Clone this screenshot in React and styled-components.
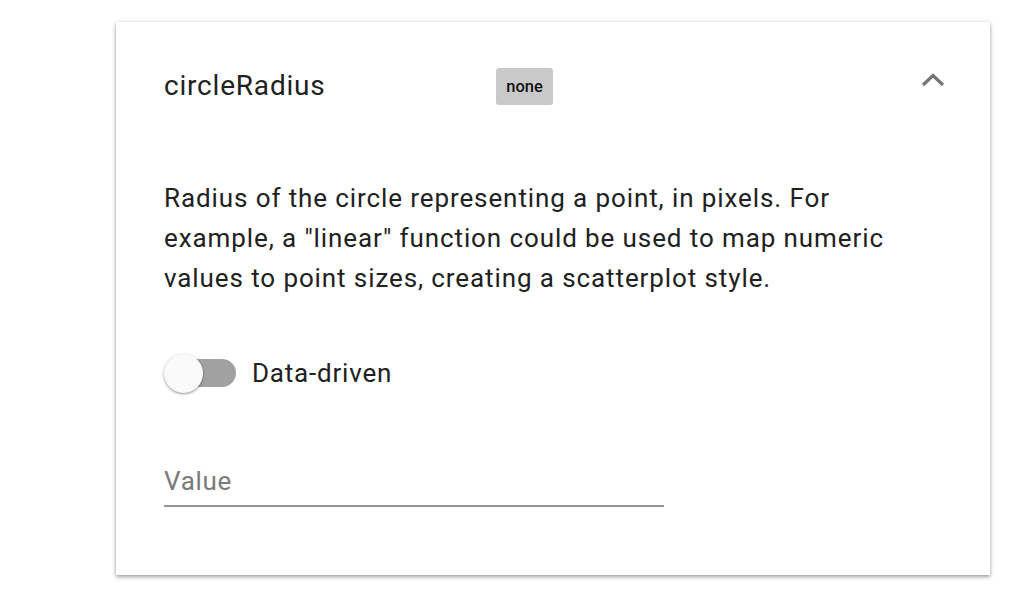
import React, { useState } from "react";
import styled, { createGlobalStyle } from "styled-components";

const Global = createGlobalStyle`
  body {
    margin: 0;
    background: #fff;
    font-family: Roboto, "Liberation Sans", sans-serif;
  }
`;

const Page = styled.div`
  padding: 22px 0 38px 116px;
`;

const Card = styled.div`
  width: 874px;
  box-sizing: border-box;
  padding: 45px 45px 68px 48px;
  background: #fff;
  box-shadow: 0 2px 4px rgba(0, 0, 0, 0.36), 0 0 3px rgba(0, 0, 0, 0.1);
`;

const Header = styled.div`
  display: grid;
  grid-template-columns: 332px auto 1fr auto;
  align-items: center;
  height: 38px;
`;

const Title = styled.div`
  font-size: 28px;
  letter-spacing: 0.8px;
  color: #212121;
  margin-bottom: 2px;
`;

const Badge = styled.span`
  display: inline-flex;
  align-items: center;
  justify-content: center;
  width: 57px;
  height: 37px;
  border-radius: 3px;
  background: #c9c9c9;
  color: #111;
  font-size: 16.5px;
  font-weight: 500;
  margin-top: 1px;
`;

const Chevron = styled.button`
  grid-column: 4;
  border: 0;
  background: none;
  padding: 0;
  margin-bottom: 12px;
  width: 24px;
  height: 16px;
  display: flex;
  align-items: center;
  justify-content: center;
  cursor: pointer;
`;

const Description = styled.p`
  margin: 73px 0 0;
  width: 740px;
  font-size: 26px;
  letter-spacing: 0.9px;
  line-height: 40px;
  color: #212121;
`;

const ToggleRow = styled.label`
  display: flex;
  align-items: center;
  gap: 16px;
  height: 40px;
  margin-top: 55px;
  font-size: 26px;
  letter-spacing: 0.8px;
  color: #212121;
  cursor: pointer;
`;

const Track = styled.span`
  position: relative;
  width: 72px;
  height: 40px;
  display: inline-block;
  &::before {
    content: "";
    position: absolute;
    left: 14px;
    right: 0;
    top: 6px;
    height: 28px;
    border-radius: 14px;
    background: ${(p) => (p.$on ? "#80cbc4" : "#a1a1a1")};
  }
`;

const Thumb = styled.span`
  position: absolute;
  top: 1px;
  left: ${(p) => (p.$on ? "34px" : "0")};
  width: 39px;
  height: 39px;
  border-radius: 50%;
  background: ${(p) => (p.$on ? "#009688" : "#fafafa")};
  box-shadow: 0 1px 3px rgba(0, 0, 0, 0.35), 0 1px 1px rgba(0, 0, 0, 0.1);
  transition: left 0.15s;
`;

const Field = styled.div`
  width: 500px;
  margin-top: 72px;
  border-bottom: 2px solid #949494;
`;

const Input = styled.input`
  display: block;
  width: 100%;
  box-sizing: border-box;
  border: 0;
  outline: none;
  padding: 0 0 8px;
  font-family: Roboto, "Liberation Sans", sans-serif;
  font-size: 26px;
  letter-spacing: 0.7px;
  line-height: 32px;
  color: #212121;
  background: transparent;
  &::placeholder {
    color: #7a7a7a;
  }
`;

export default function App() {
  const [on, setOn] = useState(false);
  return (
    <Page>
      <Global />
      <Card>
        <Header>
          <Title>circleRadius</Title>
          <Badge>none</Badge>
          <Chevron aria-label="collapse">
            <svg width="24" height="16" viewBox="0 0 24 16">
              <polyline
                points="2,13 12,3.5 22,13"
                fill="none"
                stroke="#757575"
                strokeWidth="3.2"
              />
            </svg>
          </Chevron>
        </Header>
        <Description>
          Radius of the circle representing a point, in pixels. For example, a
          "linear" function could be used to map numeric values to point sizes,
          creating a scatterplot style.
        </Description>
        <ToggleRow onClick={() => setOn(!on)}>
          <Track $on={on}>
            <Thumb $on={on} />
          </Track>
          Data-driven
        </ToggleRow>
        <Field>
          <Input placeholder="Value" />
        </Field>
      </Card>
    </Page>
  );
}
